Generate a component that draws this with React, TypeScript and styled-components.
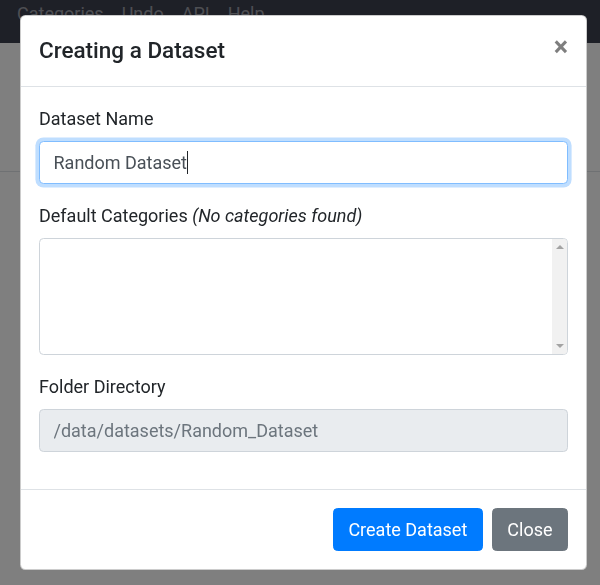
import React from "react";
import styled, { createGlobalStyle, css } from "styled-components";

const Global = createGlobalStyle`
  *, *::before, *::after { box-sizing: border-box; }
  html, body { margin: 0; padding: 0; }
  body {
    font-family: Roboto, "Liberation Sans", Arial, sans-serif;
    font-size: 18px;
    line-height: 1.5;
    color: #212529;
    background: #fff;
  }
`;

const Page = styled.div`
  position: relative;
  height: 585px;
  overflow: hidden;
`;

const Navbar = styled.nav`
  height: 43px;
  background: #3c404f;
  display: flex;
  align-items: flex-start;
  padding: 0 0 0 8px;
`;

const NavLink = styled.a`
  color: rgba(255, 255, 255, 0.5);
  padding: 0 9px;
  font-size: 18px;
  line-height: 27px;
  text-decoration: none;
`;

const Toolbar = styled.div`
  height: 129px;
  background: #fff;
  border-bottom: 1px solid #dee2e6;
`;

const Backdrop = styled.div`
  position: fixed;
  inset: 0;
  background: rgba(0, 0, 0, 0.5);
`;

const ModalLayer = styled.div`
  position: fixed;
  inset: 0;
  padding: 15px 0 0 20px;
`;

const ModalContent = styled.div`
  width: 567px;
  background: #fff;
  border: 1px solid rgba(0, 0, 0, 0.2);
  border-radius: 5.4px;
  display: flex;
  flex-direction: column;
`;

const Header = styled.div`
  display: flex;
  align-items: flex-start;
  justify-content: space-between;
  padding: 18px;
  border-bottom: 1px solid #dee2e6;
`;

const Title = styled.h5`
  margin: 0;
  font-size: 22.5px;
  font-weight: 500;
  line-height: 1.5;
`;

const CloseButton = styled.button`
  padding: 18px;
  margin: -18px -18px -18px auto;
  background: transparent;
  border: 0;
  font-family: inherit;
  font-size: 27px;
  font-weight: 700;
  line-height: 1;
  color: #000;
  opacity: 0.5;
  text-shadow: 0 1px 0 #fff;
  cursor: pointer;
`;

const Body = styled.div`
  padding: 18px 18px 19px;
`;

const FormGroup = styled.div`
  margin-bottom: 18px;
`;

const Label = styled.label`
  display: block;
  margin-bottom: 9px;
  line-height: 27px;
`;

const Hint = styled.em`
  font-style: italic;
`;

const fieldBase = css`
  display: block;
  width: 100%;
  padding: 6.75px 13.5px;
  font-family: inherit;
  font-size: 18px;
  line-height: 1.5;
  color: #495057;
  background: #fff;
  border: 1px solid #ced4da;
  border-radius: 4.5px;
  outline: 0;
`;

const FieldWrap = styled.div`
  position: relative;
`;

const TextInput = styled.input<{ $focused?: boolean }>`
  ${fieldBase};
  height: 43px;
  ${(p) =>
    p.$focused &&
    css`
      border-color: #80bdff;
      box-shadow: 0 0 0 3.6px rgba(0, 123, 255, 0.25);
    `}
  &:disabled {
    background: #e9ecef;
    color: #6c757d;
    opacity: 1;
    -webkit-text-fill-color: #6c757d;
  }
`;

const CaretLayer = styled.div`
  position: absolute;
  inset: 0;
  padding: 0 14.5px;
  display: flex;
  align-items: center;
  pointer-events: none;
  font-size: 18px;
`;

const Mirror = styled.span`
  color: transparent;
  white-space: pre;
`;

const Caret = styled.span`
  width: 1px;
  height: 23px;
  background: #212529;
`;

const TextArea = styled.textarea`
  ${fieldBase};
  height: 117px;
  resize: none;
  overflow: hidden;
  padding-right: 30px;
`;

const ScrollTrack = styled.div`
  position: absolute;
  top: 1px;
  bottom: 1px;
  right: 1px;
  width: 15px;
  background: #f1f1f1;
  border-radius: 0 3.5px 3.5px 0;
  display: flex;
  flex-direction: column;
  justify-content: space-between;
  align-items: center;
  padding: 6px 0;
  pointer-events: none;
`;

const Arrow = styled.span<{ $dir: "up" | "down" }>`
  width: 0;
  height: 0;
  border-left: 4px solid transparent;
  border-right: 4px solid transparent;
  ${(p) =>
    p.$dir === "up"
      ? css`
          border-bottom: 4px solid #a3a3a3;
        `
      : css`
          border-top: 4px solid #a3a3a3;
        `}
`;

const Footer = styled.div`
  display: flex;
  justify-content: flex-end;
  align-items: center;
  padding: 14px 13.5px 13.5px;
  border-top: 1px solid #dee2e6;
`;

const Button = styled.button<{ $variant: "primary" | "secondary" }>`
  margin: 4.5px;
  height: 43px;
  padding: 0 14.5px;
  font-family: inherit;
  font-size: 18px;
  font-weight: 400;
  line-height: 1.5;
  color: #fff;
  border: 1px solid;
  border-radius: 4.5px;
  cursor: pointer;
  ${(p) =>
    p.$variant === "primary"
      ? css`
          background: #007bff;
          border-color: #007bff;
        `
      : css`
          background: #6c757d;
          border-color: #6c757d;
        `}
`;

export default function App() {
  const name = "Random Dataset";
  return (
    <Page>
      <Global />
      <Navbar>
        <NavLink>Categories</NavLink>
        <NavLink>Undo</NavLink>
        <NavLink>API</NavLink>
        <NavLink>Help</NavLink>
      </Navbar>
      <Toolbar />
      <Backdrop />
      <ModalLayer>
        <ModalContent>
          <Header>
            <Title>Creating a Dataset</Title>
            <CloseButton aria-label="Close">×</CloseButton>
          </Header>
          <Body>
            <FormGroup>
              <Label>Dataset Name</Label>
              <FieldWrap>
                <TextInput $focused value={name} readOnly />
                <CaretLayer>
                  <Mirror>{name}</Mirror>
                  <Caret />
                </CaretLayer>
              </FieldWrap>
            </FormGroup>
            <FormGroup>
              <Label>
                Default Categories <Hint>(No categories found)</Hint>
              </Label>
              <FieldWrap>
                <TextArea readOnly />
                <ScrollTrack>
                  <Arrow $dir="up" />
                  <Arrow $dir="down" />
                </ScrollTrack>
              </FieldWrap>
            </FormGroup>
            <FormGroup>
              <Label>Folder Directory</Label>
              <TextInput value="/data/datasets/Random_Dataset" disabled />
            </FormGroup>
          </Body>
          <Footer>
            <Button $variant="primary">Create Dataset</Button>
            <Button $variant="secondary">Close</Button>
          </Footer>
        </ModalContent>
      </ModalLayer>
    </Page>
  );
}
